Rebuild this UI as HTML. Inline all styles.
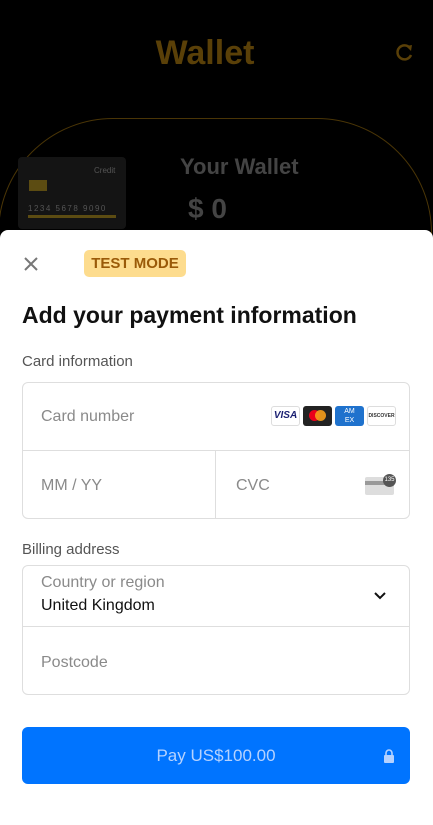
<!DOCTYPE html>
<html><head><style>
*{margin:0;padding:0;box-sizing:border-box}
body{width:433px;height:825px;background:#000;position:relative;overflow:hidden;font-family:"Liberation Sans",sans-serif}
.a{position:absolute}
.sheet{position:absolute;left:0;top:230px;width:433px;height:595px;background:#fff;border-radius:8px 8px 0 0}
.lbl{position:absolute;left:22px;font-size:15px;color:#555}
.ph{position:absolute;font-size:16px;color:#8a8a8a}
.box{position:absolute;left:22px;width:388px;border:1px solid #dedede;border-radius:6px}
</style></head><body>
<div class="a" style="left:0;top:34px;width:410px;text-align:center;font-size:34px;font-weight:bold;color:#5a4008">Wallet</div>
<svg class="a" style="left:393px;top:42px" width="22" height="22" viewBox="0 0 22 22"><path d="M17 6 A7 7 0 1 0 18 13" fill="none" stroke="#5a4008" stroke-width="2.5"/><path d="M13 4 L19 3 L18 9 Z" fill="#5a4008"/></svg>
<div class="a" style="left:-2px;top:118px;width:434px;height:230px;border:1px solid #4a3506;border-radius:115px"></div>
<div class="a" style="left:18px;top:157px;width:108px;height:72px;background:#141414;border-radius:4px"></div>
<div class="a" style="left:29px;top:180px;width:18px;height:11px;background:#5c4c12"></div>
<div class="a" style="left:94px;top:166px;font-size:8px;color:#555">Credit</div>
<div class="a" style="left:28px;top:204px;font-size:8px;color:#555;letter-spacing:1.5px">1234 5678 9090</div>
<div class="a" style="left:28px;top:215px;width:88px;height:3px;background:#5c4c12"></div>
<div class="a" style="left:180px;top:154px;font-size:22px;font-weight:bold;color:#444">Your Wallet</div>
<div class="a" style="left:188px;top:193px;font-size:28px;font-weight:bold;color:#444">$ 0</div>
<div class="sheet"></div>
<svg class="a" style="left:23px;top:256px" width="16" height="16"><path d="M2 2L14 14M14 2L2 14" stroke="#777" stroke-width="2"/></svg>
<div class="a" style="left:84px;top:250px;width:102px;height:27px;background:#fddc8e;border-radius:5px;color:#9a5a08;font-weight:bold;font-size:15px;text-align:center;line-height:27px">TEST MODE</div>
<div class="a" style="left:22px;top:302px;font-size:23px;font-weight:bold;color:#111">Add your payment information</div>
<div class="lbl" style="top:353px">Card information</div>
<div class="box" style="top:382px;height:137px"></div>
<div class="a" style="left:22px;top:450px;width:388px;height:1px;background:#dedede"></div>
<div class="a" style="left:215px;top:450px;width:1px;height:69px;background:#dedede"></div>
<div class="ph" style="left:41px;top:408px">Card number</div>
<div class="a" style="left:271px;top:406px;width:29px;height:20px;border:1px solid #ddd;border-radius:3px;font-size:10px;font-weight:bold;font-style:italic;color:#1a1f71;text-align:center;line-height:18px">VISA</div>
<div class="a" style="left:303px;top:406px;width:29px;height:20px;background:#222;border-radius:3px"><div class="a" style="left:6px;top:4px;width:11px;height:11px;border-radius:50%;background:#eb001b"></div><div class="a" style="left:12px;top:4px;width:11px;height:11px;border-radius:50%;background:#f79e1b;opacity:.9"></div></div>
<div class="a" style="left:335px;top:406px;width:29px;height:20px;background:#1f72cd;border-radius:3px;color:#fff;font-size:7px;text-align:center;line-height:9px;padding-top:1px">AM<br>EX</div>
<div class="a" style="left:367px;top:406px;width:29px;height:20px;border:1px solid #ddd;border-radius:3px;font-size:5px;font-weight:bold;color:#333;text-align:center;line-height:18px">DISCOVER</div>
<div class="ph" style="left:41px;top:477px">MM / YY</div>
<div class="ph" style="left:236px;top:477px">CVC</div>
<div class="a" style="left:365px;top:477px;width:29px;height:18px;background:#ddd;border-radius:2px"><div style="margin-top:4px;height:4px;background:#999"></div></div>
<div class="a" style="left:383px;top:474px;width:13px;height:13px;border-radius:50%;background:#555;color:#fff;font-size:6px;text-align:center;line-height:13px">135</div>
<div class="lbl" style="top:541px">Billing address</div>
<div class="box" style="top:565px;height:130px"></div>
<div class="a" style="left:22px;top:626px;width:388px;height:1px;background:#dedede"></div>
<div class="ph" style="left:41px;top:574px">Country or region</div>
<div class="a" style="left:41px;top:597px;font-size:16px;color:#111">United Kingdom</div>
<svg class="a" style="left:373px;top:591px" width="14" height="10"><path d="M2 2L7 7L12 2" fill="none" stroke="#111" stroke-width="2"/></svg>
<div class="ph" style="left:41px;top:654px">Postcode</div>
<div class="a" style="left:22px;top:727px;width:388px;height:57px;background:#0074ff;border-radius:6px;color:#b5d2ff;font-size:17px;text-align:center;line-height:57px">Pay US$100.00</div>
<svg class="a" style="left:383px;top:749px" width="12" height="14"><rect x="1" y="6" width="10" height="8" rx="1" fill="#b5d2ff"/><path d="M3 6V4a3 3 0 0 1 6 0v2" fill="none" stroke="#b5d2ff" stroke-width="1.6"/></svg>
</body></html>
